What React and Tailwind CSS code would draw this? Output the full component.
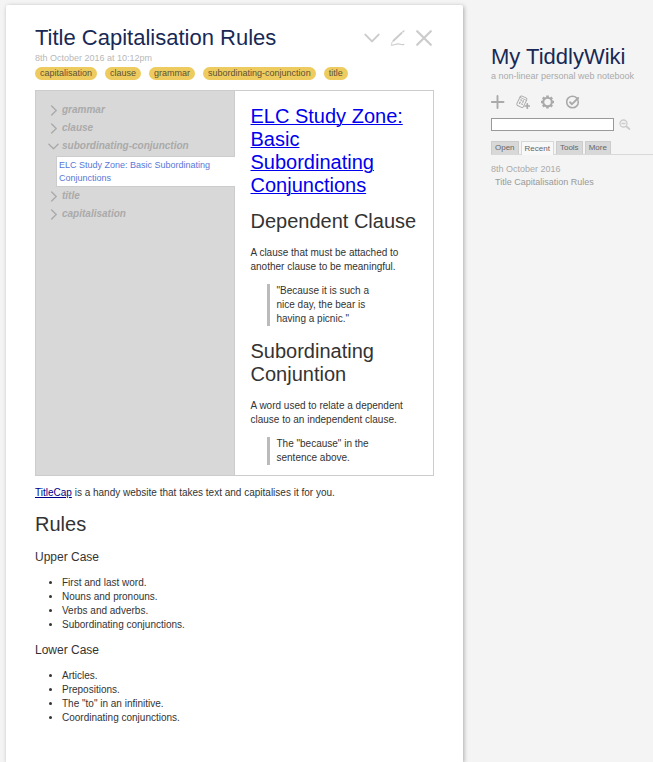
const tags = ["capitalisation", "clause", "grammar", "subordinating-conjunction", "title"];
const upperCase = ["First and last word.", "Nouns and pronouns.", "Verbs and adverbs.", "Subordinating conjunctions."];
const lowerCase = ["Articles.", "Prepositions.", 'The "to" in an infinitive.', "Coordinating conjunctions."];

function Chevron({ open, className }) {
  return (
    <svg viewBox="0 0 12 12" className={className} fill="none" stroke="currentColor" strokeWidth="1.5" strokeLinecap="round" strokeLinejoin="round" aria-hidden="true">
      <path d={open ? "M1 3.5 6 8.5 11 3.5" : "M4 1 9 6 4 11"} />
    </svg>
  );
}

function PencilIcon() {
  return (
    <svg viewBox="0 0 16 16" className="size-4" fill="none" stroke="currentColor" strokeLinecap="round" aria-hidden="true">
      <path d="M3.4 10.800 11.600 3" strokeWidth="1.900" />
      <path d="M13 1.800 13.800 1" strokeWidth="1.600" />
      <path d="M2.300 11.800 1.400 14.300" strokeWidth="0.900" />
      <path d="M1.500 15.200C4 15.400 5.500 14 8 13.800S10.500 15.300 13.800 14.400" strokeWidth="1.200" />
    </svg>
  );
}

function CloseIcon() {
  return (
    <svg viewBox="0 0 16 16" className="size-4" fill="none" stroke="currentColor" strokeWidth="2.200" strokeLinecap="round" aria-hidden="true">
      <path d="M1.200 1.200 14.800 14.800M14.800 1.200 1.200 14.800" />
    </svg>
  );
}

function PlusIcon() {
  return (
    <svg viewBox="0 0 14 14" className="size-3.5" fill="none" stroke="currentColor" strokeWidth="1.900" strokeLinecap="round" aria-hidden="true">
      <path d="M6.500 1V13M.9 7H12.500" />
    </svg>
  );
}

function JournalIcon() {
  return (
    <svg viewBox="0 0 14 14" className="size-3.5" fill="none" stroke="currentColor" strokeLinecap="round" strokeLinejoin="round" aria-hidden="true">
      <g transform="rotate(26 5.800 6.500)">
        <rect x="2.300" y="1.500" width="7.200" height="10.400" rx="1.500" strokeWidth="0.900" />
        <path d="M2.300 3.500H9.500" strokeWidth="0.700" />
        <path d="M4.200 5.500H5M6.900 5.200V6.700M4.600 7.800V9.200M6.800 8.800H7.500" strokeWidth="1.300" />
      </g>
      <path d="M11.300 8.800V13.200M9.100 11H13.500" strokeWidth="1.700" />
    </svg>
  );
}

function GearIcon() {
  return (
    <svg viewBox="0 0 14 14" className="size-3.5" fill="none" stroke="currentColor" aria-hidden="true">
      <circle cx="6.500" cy="7" r="4.300" strokeWidth="2.100" />
      <path d="M6.500 .4V2.400M6.500 11.600V13.600M0 7H2M11 7H13M1.900 2.400 3.300 3.800M9.700 10.200 11.100 11.600M11.100 2.400 9.700 3.800M3.300 10.200 1.900 11.600" strokeWidth="2.600" />
    </svg>
  );
}

function SavedIcon() {
  return (
    <svg viewBox="0 0 14 14" className="size-3.5" fill="none" stroke="currentColor" strokeLinecap="round" strokeLinejoin="round" aria-hidden="true">
      <circle cx="6.500" cy="7" r="5.800" strokeWidth="1.600" />
      <path d="M4 7.300 6 9.200 12.200 3" strokeWidth="1.900" />
    </svg>
  );
}

function SearchIcon() {
  return (
    <svg viewBox="0 0 12 12" className="size-3" fill="none" stroke="currentColor" strokeLinecap="round" aria-hidden="true">
      <circle cx="4.500" cy="4.500" r="3.500" strokeWidth="1.300" />
      <path d="M3 4.500H6" strokeWidth="1.300" />
      <path d="M7.500 7.500 10.400 10" strokeWidth="1.900" />
    </svg>
  );
}

function TreeItem({ label, open }) {
  return (
    <button type="button" aria-expanded={!!open} className="flex h-[18px] items-center gap-[3px] pl-3 text-[10px] font-bold italic text-[#aaaaaa]">
      <Chevron open={open} className="size-[11px]" />
      {label}
    </button>
  );
}

function Heading({ children }) {
  return <h2 className="text-[20px] leading-[23px]">{children}</h2>;
}

function Quote({ children }) {
  return <blockquote className="mt-2.5 mr-7 ml-4 border-l-3 border-[#bbbbbb] pl-[7px]">{children}</blockquote>;
}

function RuleList({ title, items }) {
  return (
    <section>
      <h3 className="mt-2.5 text-[12px] leading-4">{title}</h3>
      <ul className="mt-[11px] list-disc pl-[27px]">
        {items.map((item) => (
          <li key={item}>{item}</li>
        ))}
      </ul>
    </section>
  );
}

function Tab({ label, selected }) {
  return (
    <button
      type="button"
      role="tab"
      aria-selected={!!selected}
      className={
        selected
          ? "-mb-px h-[14px] rounded-t-[1px] border border-b-0 border-[#d8d8d8] bg-[#f8f8f8] px-[3px] text-[8px] leading-3 text-[#666666]"
          : "h-[13px] rounded-t-[1px] border border-b-0 border-[#cccccc] bg-[#d8d8d8] px-[3px] text-[8px] leading-3 text-[#666666]"
      }
    >
      {label}
    </button>
  );
}

export default function App() {
  return (
    <div className="flex min-h-screen bg-[#f4f4f4] pl-1.5 font-['Liberation_Sans',Arial,sans-serif] text-[10px] leading-[14px] text-[#333333]">
      <main className="mt-[5px] min-w-0 flex-1 rounded-t-[2px] bg-white px-[29px] pt-[19px] pb-8 shadow-[1px_1px_4px_rgba(0,0,0,0.3)]">
        <header>
          <div className="flex items-center justify-between">
            <h1 className="text-[22px] leading-7 text-[#182955]">Title Capitalisation Rules</h1>
            <div className="mr-0.5 flex items-center gap-2.5 text-[#cccccc]">
              <button type="button" aria-label="More">
                <Chevron open className="size-4" />
              </button>
              <button type="button" aria-label="Edit">
                <PencilIcon />
              </button>
              <button type="button" aria-label="Close">
                <CloseIcon />
              </button>
            </div>
          </div>
          <p className="text-[9px] leading-[13px] text-[#b8b8b8]">8th October 2016 at 10:12pm</p>
          <div className="mt-0.5 flex gap-2">
            {tags.map((tag) => (
              <button key={tag} type="button" className="h-[13px] rounded-full bg-[#eecb5f] px-[5px] text-[9px] leading-[13px] text-[#5c5234]">
                {tag}
              </button>
            ))}
          </div>
        </header>

        <div className="mt-2.5 flex border border-[#cccccc]">
          <nav aria-label="Tags" className="flex w-1/2 flex-none flex-col items-stretch border-r border-[#cccccc] bg-[#d8d8d8] pt-2.5">
            <TreeItem label="grammar" />
            <TreeItem label="clause" />
            <TreeItem label="subordinating-conjunction" open />
            <div className="mt-px -mr-px ml-5 border border-r-0 border-[#cccccc] bg-white pt-0.5 pr-2 pb-px pl-0.5 text-[9px] leading-[13px]">
              <a href="#elc" className="text-[#5778d8]">
                ELC Study Zone: Basic Subordinating Conjunctions
              </a>
            </div>
            <TreeItem label="title" />
            <TreeItem label="capitalisation" />
          </nav>
          <article id="elc" className="min-w-0 flex-1 px-4 pt-[14px] pb-2.5">
            <Heading>
              <a href="#elc" className="text-[#0000ee] underline decoration-1">
                ELC Study Zone: Basic Subordinating Conjunctions
              </a>
            </Heading>
            <div className="mt-[13px]">
              <Heading>Dependent Clause</Heading>
            </div>
            <p className="mt-[13px]">A clause that must be attached to another clause to be meaningful.</p>
            <Quote>"Because it is such a nice day, the bear is having a picnic."</Quote>
            <div className="mt-[14px]">
              <Heading>Subordinating Conjuntion</Heading>
            </div>
            <p className="mt-[13px]">A word used to relate a dependent clause to an independent clause.</p>
            <Quote>The "because" in the sentence above.</Quote>
          </article>
        </div>

        <p className="mt-2.5">
          <a href="#titlecap" className="text-[#000088] underline">TitleCap</a> is a handy website that takes text and capitalises it for you.
        </p>
        <div className="my-[13px]">
          <Heading>Rules</Heading>
        </div>
        <RuleList title="Upper Case" items={upperCase} />
        <RuleList title="Lower Case" items={lowerCase} />
      </main>

      <aside className="w-[190px] flex-none pt-[43px] pl-7 text-[#aaaaaa]">
        <h1 className="text-[22px] leading-7 text-[#182955]">My TiddlyWiki</h1>
        <p className="-mt-0.5 text-[9px]">a non-linear personal web notebook</p>
        <div className="mt-3 flex gap-[11px]">
          <button type="button" aria-label="New tiddler">
            <PlusIcon />
          </button>
          <button type="button" aria-label="New journal">
            <JournalIcon />
          </button>
          <button type="button" aria-label="Control panel">
            <GearIcon />
          </button>
          <button type="button" aria-label="Save changes">
            <SavedIcon />
          </button>
        </div>
        <div className="mt-[9px] flex items-center gap-[5px]">
          <input type="search" aria-label="Search" className="h-[13px] w-[123px] border border-[#999999] bg-white px-0.5 text-[9px]" />
          <button type="button" aria-label="Advanced search" className="text-[#cccccc]">
            <SearchIcon />
          </button>
        </div>
        <div role="tablist" className="mt-[10px] flex items-end gap-0.5 border-b border-[#d8d8d8]">
          <Tab label="Open" />
          <Tab label="Recent" selected />
          <Tab label="Tools" />
          <Tab label="More" />
        </div>
        <div className="mt-2 text-[9px] leading-[13px]">
          <p>8th October 2016</p>
          <a href="#top" className="ml-1 block text-[#999999]">Title Capitalisation Rules</a>
        </div>
      </aside>
    </div>
  );
}
